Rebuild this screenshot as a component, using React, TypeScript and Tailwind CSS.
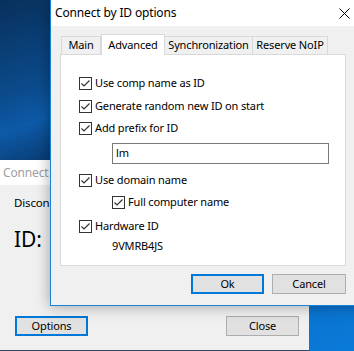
import React from 'react';

const Check = () => (
    <span className="w-[13px] h-[13px] border border-[#333333] bg-white flex items-center justify-center shrink-0">
        <svg width="11" height="11" viewBox="0 0 11 11">
            <path d="M1.5 5.5 L4 8 L9.5 2.5" fill="none" stroke="#333333" strokeWidth="1.2" />
        </svg>
    </span>
);

const Row = ({ label, className }: { label: string; className?: string }) => (
    <div className={`flex items-center gap-[3px] h-[16px] ${className ?? ''}`}>
        <Check />
        <span>{label}</span>
    </div>
);

const App = () => {
    return (
        <div
            className="relative w-[354px] h-[351px] overflow-hidden text-[11px] tracking-[-0.15px] text-black"
            style={{ fontFamily: '"Noto Sans", "Open Sans", sans-serif' }}
        >
            {/* wallpaper */}
            <div className="absolute inset-0 bg-[linear-gradient(160deg,#08305c_0%,#0b4a8a_20%,#0d5aa8_28%,#09396e_38%,#0a4d93_60%,#0a6fcc_80%,#0a7ad8_100%)]" />

            {/* back window */}
            <div className="absolute left-0 top-[160px] w-[309px] h-[191px] bg-[#f0f0f0] border-b border-[#2d4a6a] flex flex-col">
                <div className="h-[25px] bg-white flex items-center pl-[3px] text-[#a0a0a0] text-[12px]">Connect</div>
                <div className="pl-[14px] pt-[9px] text-[11.5px]">Disconnect</div>
                <div className="pl-[14px] pt-[14px] text-[21px] leading-[28px]">ID:</div>
                <div className="mt-auto mb-[14px] flex justify-between px-[15px] pr-[10px]">
                    <div className="w-[73px] h-[20px] border-2 border-[#0078d7] bg-[#e1e1e1] flex items-center justify-center">Options</div>
                    <div className="w-[73px] h-[20px] border border-[#adadad] bg-[#e1e1e1] flex items-center justify-center">Close</div>
                </div>
            </div>

            {/* front dialog */}
            <div className="absolute left-[50px] top-0 w-[320px] h-[306px] bg-[#f0f0f0] border-l border-b border-[#1883d7] shadow-[0_0_14px_rgba(0,0,0,0.35)] flex flex-col">
                <div className="h-[26px] bg-white flex items-center justify-between pl-[4px] pr-[20px] text-[12px]">
                    <span>Connect by ID options</span>
                    <svg width="11" height="11" viewBox="0 0 11 11">
                        <path d="M0.5 0.5 L10.5 10.5 M10.5 0.5 L0.5 10.5" stroke="#000" strokeWidth="1" />
                    </svg>
                </div>
                <div className="pl-[9px] pt-[8px]">
                    <div className="flex items-end h-[20px] relative z-10">
                        <div className="h-[18px] w-[40px] border border-b-0 border-[#d9d9d9] bg-[#f0f0f0] flex items-center justify-center ml-[1px]">Main</div>
                        <div className="h-[21px] w-[64px] border border-b-0 border-[#d9d9d9] bg-white flex items-center justify-center -mb-px">Advanced</div>
                        <div className="h-[18px] w-[88px] border border-b-0 border-l-0 border-[#d9d9d9] bg-[#f0f0f0] flex items-center justify-center whitespace-nowrap">Synchronization</div>
                        <div className="h-[18px] w-[75px] border border-b-0 border-l-0 border-[#d9d9d9] bg-[#f0f0f0] flex items-center justify-center whitespace-nowrap">Reserve NoIP</div>
                    </div>
                    <div className="w-[286px] h-[212px] bg-white border border-[#d9d9d9] flex flex-col pl-[18px] pt-[20px]">
                        <Row label="Use comp name as ID" />
                        <Row label="Generate random new ID on start" className="mt-[7px]" />
                        <Row label="Add prefix for ID" className="mt-[6px]" />
                        <div className="ml-[33px] mt-[7px] w-[217px] h-[21px] border border-[#7a7a7a] flex items-center pl-[3px]">lm</div>
                        <Row label="Use domain name" className="mt-[8px]" />
                        <Row label="Full computer name" className="mt-[6px] ml-[33px]" />
                        <Row label="Hardware ID" className="mt-[8px]" />
                        <div className="ml-[33px] mt-[4px] text-[11px]">9VMRB4JS</div>
                    </div>
                    <div className="flex gap-[8px] mt-[8px] ml-[131px]">
                        <div className="w-[73px] h-[20px] border-2 border-[#0078d7] bg-[#e1e1e1] flex items-center justify-center">Ok</div>
                        <div className="w-[74px] h-[20px] border border-[#adadad] bg-[#e1e1e1] flex items-center justify-center">Cancel</div>
                    </div>
                </div>
            </div>
        </div>
    );
};

export default App;
